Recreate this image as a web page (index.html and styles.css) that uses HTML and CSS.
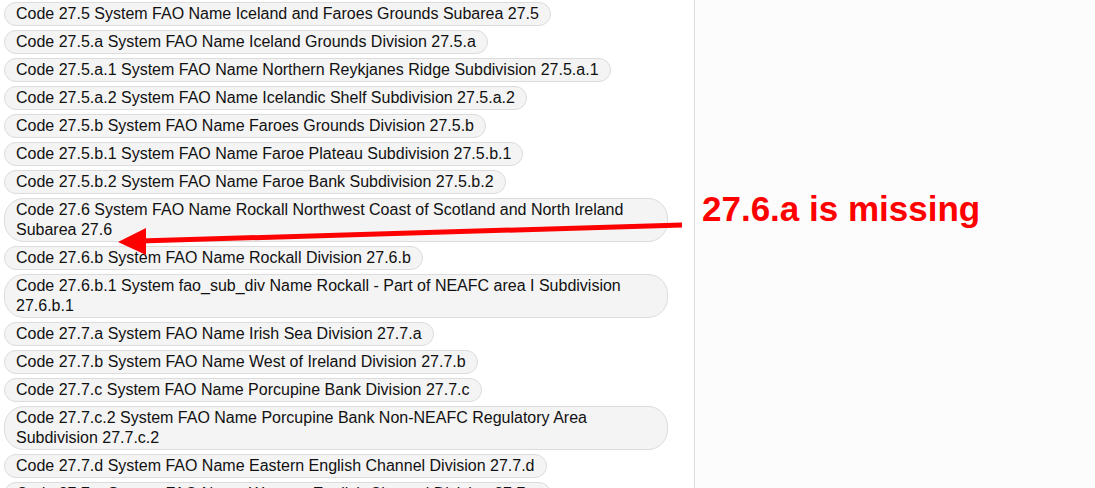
FILE: index.html
```html
<!DOCTYPE html>
<html lang="en">
<head>
    <meta charset="UTF-8">
    <title>FAO areas</title>
    <link rel="stylesheet" href="styles.css">
</head>
<body>
    <div class="page">
        <div class="list-panel">
            <span class="chip">Code 27.5 System FAO Name Iceland and Faroes Grounds Subarea 27.5</span>
            <span class="chip">Code 27.5.a System FAO Name Iceland Grounds Division 27.5.a</span>
            <span class="chip">Code 27.5.a.1 System FAO Name Northern Reykjanes Ridge Subdivision 27.5.a.1</span>
            <span class="chip">Code 27.5.a.2 System FAO Name Icelandic Shelf Subdivision 27.5.a.2</span>
            <span class="chip">Code 27.5.b System FAO Name Faroes Grounds Division 27.5.b</span>
            <span class="chip">Code 27.5.b.1 System FAO Name Faroe Plateau Subdivision 27.5.b.1</span>
            <span class="chip">Code 27.5.b.2 System FAO Name Faroe Bank Subdivision 27.5.b.2</span>
            <span class="chip">Code 27.6 System FAO Name Rockall Northwest Coast of Scotland and North Ireland Subarea 27.6</span>
            <span class="chip">Code 27.6.b System FAO Name Rockall Division 27.6.b</span>
            <span class="chip">Code 27.6.b.1 System fao_sub_div Name Rockall - Part of NEAFC area I Subdivision 27.6.b.1</span>
            <span class="chip">Code 27.7.a System FAO Name Irish Sea Division 27.7.a</span>
            <span class="chip">Code 27.7.b System FAO Name West of Ireland Division 27.7.b</span>
            <span class="chip">Code 27.7.c System FAO Name Porcupine Bank Division 27.7.c</span>
            <span class="chip">Code 27.7.c.2 System FAO Name Porcupine Bank Non-NEAFC Regulatory Area Subdivision 27.7.c.2</span>
            <span class="chip">Code 27.7.d System FAO Name Eastern English Channel Division 27.7.d</span>
            <span class="chip">Code 27.7.e System FAO Name Western English Channel Division 27.7.e</span>
        </div>
        <div class="side-panel"></div>
    </div>

    <!-- annotation drawn over the screenshot -->
    <svg class="arrow" width="1095" height="488" viewBox="0 0 1095 488">
        <line x1="682" y1="225" x2="140" y2="241" stroke="#ff0000" stroke-width="5"/>
        <polygon points="118,242 146,228 146,255" fill="#ff0000"/>
    </svg>
    <div class="note">27.6.a is missing</div>
</body>
</html>
```

FILE: styles.css
```css
body {
    margin: 0;
    height: 488px;
    overflow: hidden;
    font-family: 'Liberation Sans', Arial, sans-serif;
    color: #111;
    position: relative;
}

.page {
    display: flex;
    height: 100%;
}

.list-panel {
    width: 664px;
    padding: 2px 26px 0 4px;
    border-right: 1px solid #ddd;
    background: #fff;
    display: flex;
    flex-direction: column;
    align-items: flex-start;
    gap: 4px;
}

.side-panel {
    flex: 1;
    background: #fcfcfc;
}

.chip {
    display: block;
    max-width: 640px;
    padding: 1px 11px;
    font-size: 16px;
    line-height: 20px;
    background: #f4f4f4;
    border: 1px solid #dcdcdc;
    border-radius: 20px;
}

.arrow {
    position: absolute;
    left: 0;
    top: 0;
}

.note {
    position: absolute;
    left: 702px;
    top: 191px;
    font-size: 35px;
    line-height: 35px;
    font-weight: bold;
    color: #ff0000;
    white-space: nowrap;
}
```
